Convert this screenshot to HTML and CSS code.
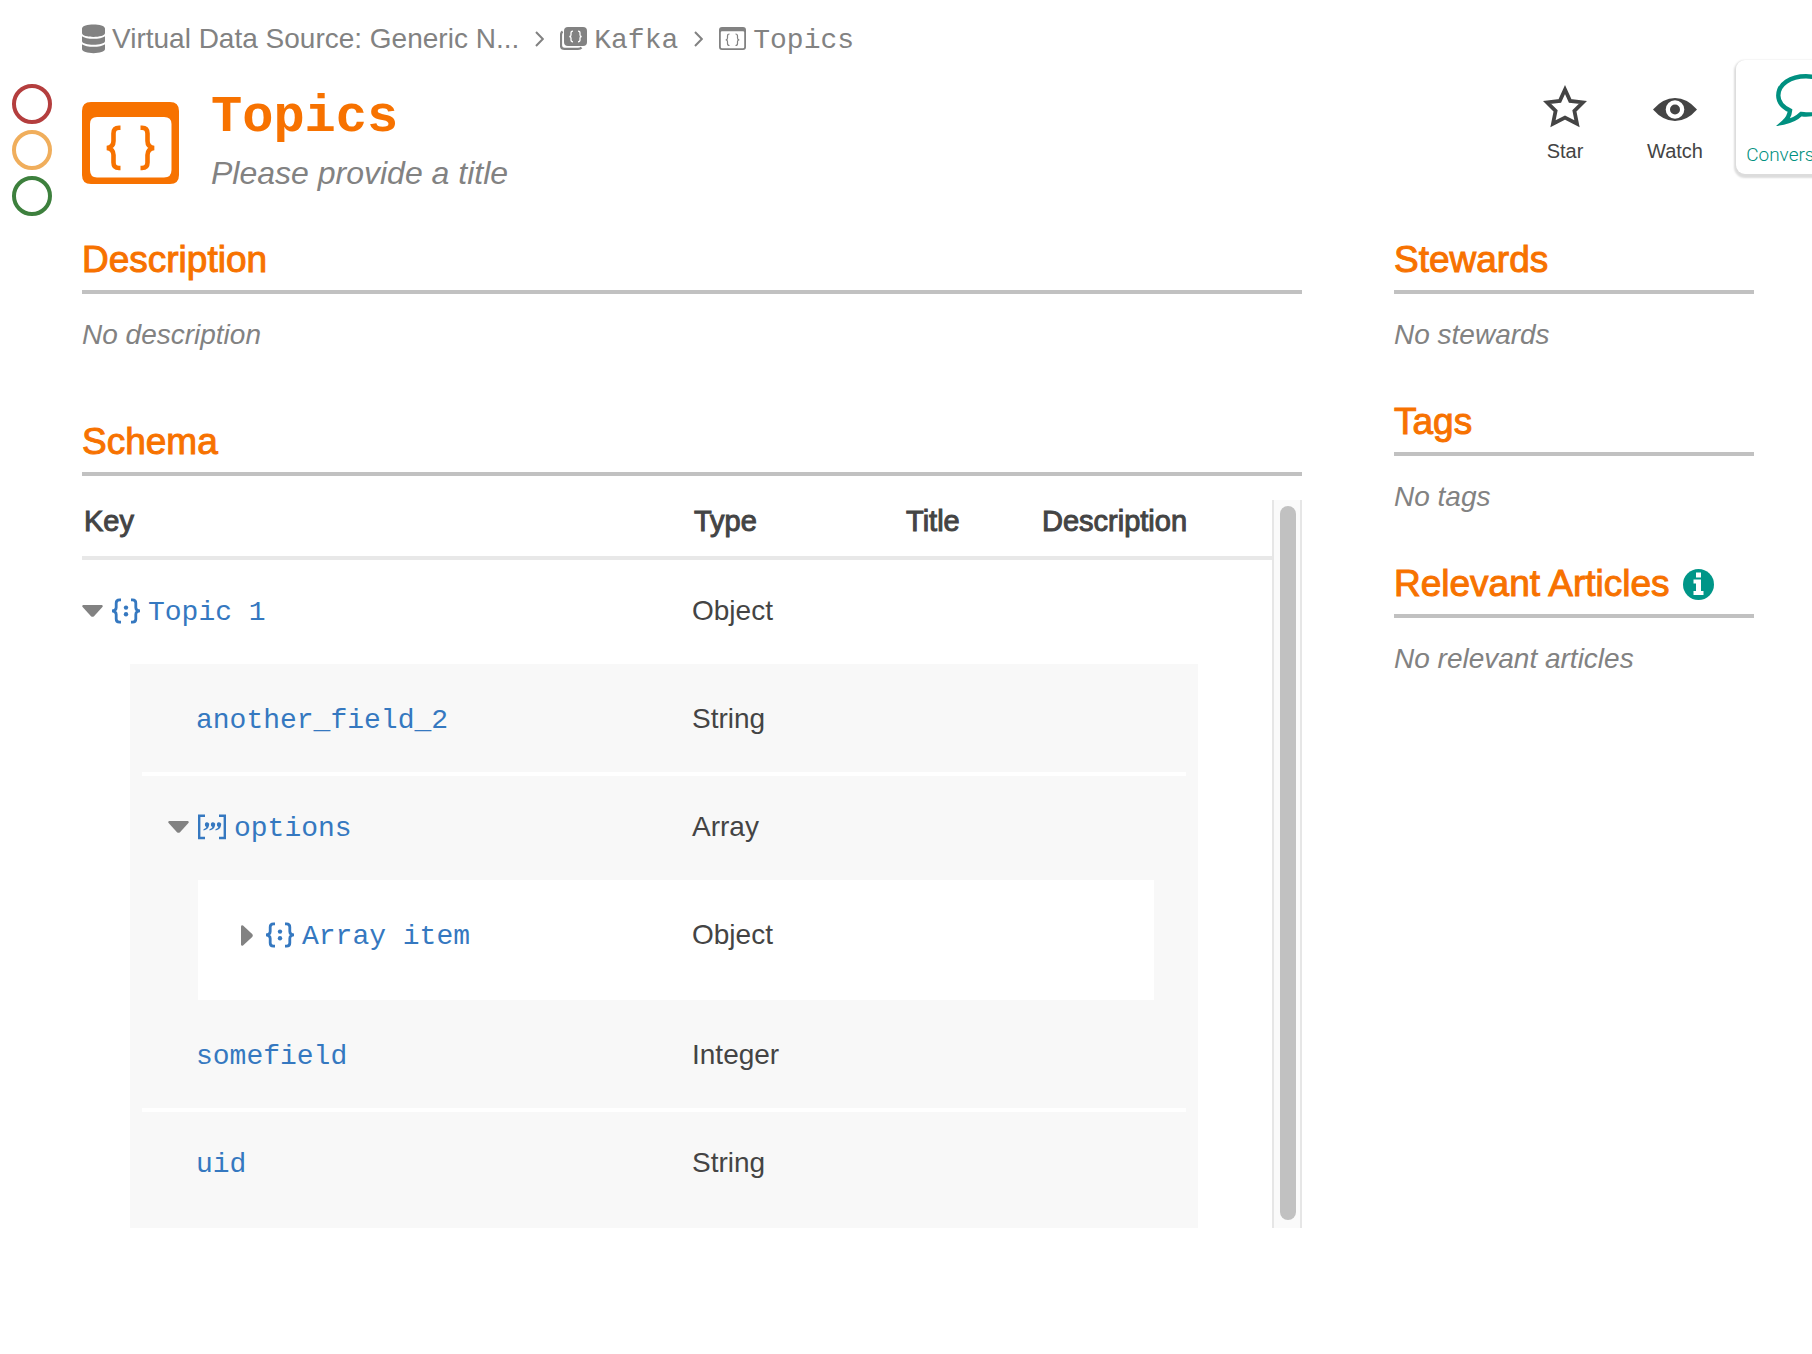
FILE: index.html
```html
<!DOCTYPE html>
<html lang="en">
<head>
<meta charset="utf-8">
<meta name="viewport" content="width=device-width, initial-scale=1">
<title>Topics</title>
<link rel="stylesheet" href="styles.css">
</head>
<body>
<svg class="sprite" aria-hidden="true">
  <symbol id="caret-down" viewBox="0 0 21 12"><path d="M1.2 0H19.8Q21.4 .6 20.4 2L12 11.2Q10.500 12.400 9 11.200L.6 2Q-.4 .6 1.200 0Z"/></symbol>
  <symbol id="caret-right" viewBox="0 0 12 21"><path d="M0 1.200V19.800Q.6 21.400 2 20.400L11.200 12Q12.400 10.500 11.200 9L2 .6Q.6 -.4 0 1.200Z"/></symbol>
  <symbol id="object" viewBox="0 0 28 26">
    <path d="M9 1.800H7.500Q4.200 1.800 4.200 5V9.500Q4.200 12.700 0 12.900Q4.200 13.100 4.200 16.500V21Q4.200 24.200 7.500 24.200H9M19 1.800H20.500Q23.800 1.800 23.800 5V9.500Q23.800 12.700 28 12.900Q23.800 13.100 23.800 16.500V21Q23.800 24.200 20.500 24.200H19" fill="none" stroke="currentColor" stroke-width="2.800"/>
    <circle cx="14" cy="9.600" r="2.200"/><circle cx="14" cy="16.300" r="2.200"/>
  </symbol>
  <symbol id="array" viewBox="0 0 28 26">
    <path d="M7 1.700H1.200V24H7M21 1.700H26.800V24H21" fill="none" stroke="currentColor" stroke-width="2.400"/>
    <path d="M7 9.500A2 2 0 0 1 11 11.500Q10.500 15.500 5.500 16.500V15.200Q8 14.500 8.500 13Q6.500 12.500 7 9.500Z"/>
    <path d="M13 9.500A2 2 0 0 1 17 11.500Q16.500 15.500 11.500 16.500V15.200Q14 14.500 14.500 13Q12.500 12.500 13 9.500Z"/>
    <path d="M19 9.500A2 2 0 0 1 23 11.500Q22.500 15.500 17.500 16.500V15.200Q20 14.500 20.500 13Q18.500 12.500 19 9.500Z"/>
  </symbol>
</svg>

<div class="page">
  <div class="flags">
    <button class="flag flag-red" type="button" aria-label="Deprecate"></button>
    <button class="flag flag-amber" type="button" aria-label="Warn"></button>
    <button class="flag flag-green" type="button" aria-label="Endorse"></button>
  </div>

  <div class="content">
    <nav class="crumbs" aria-label="Breadcrumb">
      <a class="crumb" href="#">
        <svg width="23" height="30" viewBox="0 0 23 30"><path d="M0 4.500C0 -1 23 -1 23 4.500V9C23 14.200 0 14.200 0 9ZM0 12.200C4 15.600 19 15.600 23 12.200V17C23 22 0 22 0 17ZM0 20.200C4 23.600 19 23.600 23 20.200V25C23 30.500 0 30.500 0 25Z"/></svg>
        <span>Virtual Data Source: Generic N...</span>
      </a>
      <svg class="chevron" width="9" height="16" viewBox="0 0 9 16"><path d="M1 1L7.800 8L1 15"/></svg>
      <a class="crumb" href="#">
        <svg width="27" height="24" viewBox="0 0 27 24"><path d="M8 0H23Q27 0 27 4V15Q27 19 23 19H8Q4 19 4 15V4Q4 0 8 0Z"/><path d="M2.600 4.500Q1 5.500 1 8V18.500Q1 21.800 4.500 21.800H18Q20.500 21.800 21.500 20.500" fill="none" stroke="currentColor" stroke-width="2.200"/><path d="M13 4.200Q11 4.200 11 6V8Q11 9.500 9.300 9.500Q11 9.500 11 11V13Q11 14.800 13 14.800M18 4.200Q20 4.200 20 6V8Q20 9.500 21.700 9.500Q20 9.500 20 11V13Q20 14.800 18 14.800" fill="none" stroke="#fff" stroke-width="1.300"/></svg>
        <span class="mono">Kafka</span>
      </a>
      <svg class="chevron" width="9" height="16" viewBox="0 0 9 16"><path d="M1 1L7.800 8L1 15"/></svg>
      <a class="crumb" href="#" aria-current="page">
        <svg width="27" height="24" viewBox="0 0 27 24"><path fill-rule="evenodd" d="M3 0H24Q27 0 27 3V20Q27 23 24 23H3Q0 23 0 20V3Q0 0 3 0ZM3 4.200Q1.800 4.200 1.800 5.500V20Q1.800 21.300 3 21.300H24Q25.200 21.300 25.200 20V5.500Q25.200 4.200 24 4.200Z"/><path d="M10.500 7Q8.500 7 8.500 9V11Q8.500 12.800 6.700 12.800Q8.500 12.800 8.500 14.500V16.500Q8.500 18.500 10.500 18.500M16.500 7Q18.500 7 18.500 9V11Q18.500 12.800 20.300 12.800Q18.500 12.800 18.500 14.500V16.500Q18.500 18.500 16.500 18.500" fill="none" stroke="currentColor" stroke-width="1.200"/></svg>
        <span class="mono">Topics</span>
      </a>
    </nav>

    <header class="head">
      <svg class="head-icon" width="97" height="82" viewBox="0 0 97 82"><path fill-rule="evenodd" d="M9 0H88Q97 0 97 9V73Q97 82 88 82H9Q0 82 0 73V9Q0 0 9 0ZM15 15Q8 15 8 22V68Q8 75.500 15 75.500H82Q89.500 75.500 89.500 68V22Q89.500 15 82 15Z"/><path d="M38.500 25.800H37Q31.500 25.800 31.500 31.500V39Q31.500 45 25 46Q31.500 47 31.500 53V60.500Q31.500 66 37 66H38.500M58.500 25.800H60Q65.500 25.800 65.500 31.500V39Q65.500 45 72 46Q65.500 47 65.500 53V60.500Q65.500 66 60 66H58.500" fill="none" stroke="currentColor" stroke-width="4.600"/></svg>
      <div class="head-text">
        <h1>Topics</h1>
        <p class="subtitle">Please provide a title</p>
      </div>
      <div class="actions">
        <button class="action" type="button">
          <svg width="44" height="44" viewBox="0 0 44 44"><path d="M22 5.500L27.200 17L40 18.400L31.400 26.900L34 39.700L22 33.600L10 39.700L12.600 26.900L4 18.400L16.800 17Z" fill="none" stroke="currentColor" stroke-width="3.800" stroke-miterlimit="10"/></svg>
          <span>Star</span>
        </button>
        <button class="action" type="button">
          <svg width="44" height="44" viewBox="0 0 44 44"><path d="M0 25.500Q10 14 22 14T44 25.500Q34 37 22 37T0 25.500Z"/><circle cx="22" cy="25.500" r="9.300" fill="#fff"/><circle cx="22" cy="25.500" r="5"/></svg>
          <span>Watch</span>
        </button>
        <button class="talk" type="button">
          <svg width="60" height="52" viewBox="0 0 60 52"><path d="M30 2.300C14.500 2.300 2.300 10 2.300 21.500C2.300 28 6.500 33 14 36.500C13.500 42 11 45.500 7.500 48.500C15 47 21 44 25 40C27 40.300 28.500 40.500 30 40.500C45.500 40.500 57.700 33 57.700 21.500C57.700 10 45.500 2.300 30 2.300Z" fill="none" stroke="currentColor" stroke-width="4.400"/></svg>
          <span>Conversations</span>
        </button>
      </div>
    </header>

    <div class="columns">
      <main class="main">
        <section>
          <h2>Description</h2>
          <p class="empty">No description</p>
        </section>

        <section>
          <h2>Schema</h2>
          <div class="schema">
            <table class="tree tree-root">
              <colgroup><col><col class="col-type"><col class="col-title"><col class="col-desc"></colgroup>
              <thead>
                <tr><th scope="col">Key</th><th scope="col">Type</th><th scope="col">Title</th><th scope="col">Description</th></tr>
              </thead>
              <tbody>
                <tr class="row">
                  <td><div class="key">
                    <button class="toggle" type="button" aria-label="Collapse Topic 1"><svg width="21" height="12"><use href="#caret-down"/></svg></button>
                    <a class="field" href="#"><svg width="28" height="26"><use href="#object"/></svg><span class="mono">Topic 1</span></a>
                  </div></td>
                  <td>Object</td><td></td><td></td>
                </tr>
                <tr>
                  <td colspan="4">
                    <div class="group group-gray">
                      <table class="tree">
                        <colgroup><col><col class="col-type"><col class="col-title"><col class="col-desc-2"></colgroup>
                        <tbody>
                          <tr class="row ruled">
                            <td><div class="key leaf"><a class="field" href="#"><span class="mono">another_field_2</span></a></div></td>
                            <td>String</td><td></td><td></td>
                          </tr>
                          <tr class="row">
                            <td><div class="key nested">
                              <button class="toggle" type="button" aria-label="Collapse options"><svg width="21" height="12"><use href="#caret-down"/></svg></button>
                              <a class="field" href="#"><svg width="28" height="26"><use href="#array"/></svg><span class="mono">options</span></a>
                            </div></td>
                            <td>Array</td><td></td><td></td>
                          </tr>
                          <tr>
                            <td colspan="4">
                              <div class="group group-white">
                                <table class="tree">
                                  <colgroup><col><col class="col-type"><col class="col-title"><col class="col-desc-3"></colgroup>
                                  <tbody>
                                    <tr class="row">
                                      <td><div class="key nested">
                                        <button class="toggle" type="button" aria-label="Expand Array item"><svg width="12" height="21"><use href="#caret-right"/></svg></button>
                                        <a class="field" href="#"><svg width="28" height="26"><use href="#object"/></svg><span class="mono">Array item</span></a>
                                      </div></td>
                                      <td>Object</td><td></td><td></td>
                                    </tr>
                                  </tbody>
                                </table>
                              </div>
                            </td>
                          </tr>
                          <tr class="row ruled">
                            <td><div class="key leaf"><a class="field" href="#"><span class="mono">somefield</span></a></div></td>
                            <td>Integer</td><td></td><td></td>
                          </tr>
                          <tr class="row">
                            <td><div class="key leaf"><a class="field" href="#"><span class="mono">uid</span></a></div></td>
                            <td>String</td><td></td><td></td>
                          </tr>
                        </tbody>
                      </table>
                    </div>
                  </td>
                </tr>
              </tbody>
            </table>
            <div class="scrollbar"><div class="thumb"></div></div>
          </div>
        </section>
      </main>

      <aside class="side">
        <section>
          <h2>Stewards</h2>
          <p class="empty">No stewards</p>
        </section>
        <section>
          <h2>Tags</h2>
          <p class="empty">No tags</p>
        </section>
        <section>
          <h2>Relevant Articles
            <svg class="info" width="31" height="31" viewBox="0 0 31 31"><circle cx="15.500" cy="15.500" r="15.500"/><path fill="#fff" d="M13 3.500H18V8.500H13ZM10.500 10.500H18V22H20.500V26H10.500V22H13V14.500H10.500Z"/></svg>
          </h2>
          <p class="empty">No relevant articles</p>
        </section>
      </aside>
    </div>
  </div>
</div>
</body>
</html>
```
FILE: styles.css
```css
* {
  box-sizing: border-box;
}

body {
  margin: 0;
  background: #fff;
  color: #444;
  font-family: "Liberation Sans", Arial, sans-serif;
  font-size: 28px;
  line-height: 36px;
  overflow-x: hidden;
}

h1, h2, p {
  margin: 0;
}

a {
  color: inherit;
  text-decoration: none;
}

button {
  padding: 0;
  border: 0;
  background: none;
  color: inherit;
  font: inherit;
  cursor: pointer;
}

svg {
  flex: none;
  display: block;
  fill: currentColor;
}

.sprite {
  position: absolute;
  width: 0;
  height: 0;
}

.mono {
  padding-top: 4px;
  font-family: "Liberation Mono", "Courier New", monospace;
}

.page {
  display: flex;
  padding-left: 12px;
}

.flags {
  display: flex;
  flex-direction: column;
  gap: 6px;
  flex: none;
  width: 40px;
  margin-right: 30px;
  padding-top: 84px;
}

.flag {
  width: 40px;
  height: 40px;
  border: 4px solid;
  border-radius: 50%;
}

.flag-red { color: #b43e3e; }
.flag-amber { color: #f0ae5c; }
.flag-green { color: #3d803d; }

.content {
  flex: 1;
  min-width: 0;
}

/* Breadcrumb */

.crumbs {
  display: flex;
  align-items: center;
  gap: 16px;
  padding-top: 21px;
  color: #828282;
  white-space: nowrap;
}

.crumb {
  display: flex;
  align-items: center;
  gap: 7px;
  height: 36px;
}

.chevron {
  fill: none;
  stroke: currentColor;
  stroke-width: 2px;
}

/* Page header */

.head {
  display: flex;
  align-items: flex-start;
  padding-top: 3px;
}

.head-icon {
  margin-top: 42px;
  color: #f77200;
}

.head-text {
  flex: 1;
  margin-left: 32px;
  padding-top: 28px;
}

h1 {
  color: #f77200;
  font: bold 52px/60px "Liberation Mono", "Courier New", monospace;
}

.subtitle {
  margin-top: 5px;
  color: #828282;
  font-size: 32px;
  font-style: italic;
  line-height: 40px;
}

.actions {
  display: flex;
  align-items: flex-start;
  margin-right: -64px;
}

.action,
.talk {
  display: flex;
  flex-direction: column;
  align-items: center;
  font-size: 20px;
  line-height: 24px;
}

.action {
  gap: 11px;
  width: 110px;
  padding-top: 24px;
}

.talk {
  gap: 17px;
  width: 140px;
  height: 114px;
  margin-left: 6px;
  padding-top: 14px;
  border-radius: 9px;
  background: #fff;
  box-shadow: 0 2px 2px 2px #dcdcdc;
  color: #009080;
  font-family: Roboto, "Liberation Sans", sans-serif;
  font-size: 19px;
  font-weight: 300;
}

/* Sections */

.columns {
  display: flex;
  align-items: flex-start;
  gap: 92px;
  padding: 44px 58px 0 0;
}

.main {
  flex: 1;
  min-width: 0;
  display: flex;
  flex-direction: column;
  gap: 66px;
}

.side {
  display: flex;
  flex-direction: column;
  gap: 46px;
  flex: none;
  width: 360px;
}

h2 {
  display: flex;
  align-items: center;
  gap: 13px;
  padding: 1px 0 8px;
  border-bottom: 4px solid #c1c1c1;
  color: #f77200;
  font-size: 37px;
  font-weight: normal;
  line-height: 44px;
  white-space: nowrap;
  -webkit-text-stroke: 1px currentColor;
}

.info {
  color: #009688;
}

.empty {
  margin-top: 23px;
  color: #828282;
  font-style: italic;
}

/* Schema tree */

.schema {
  display: flex;
  margin-top: 24px;
}

.tree {
  width: 100%;
  border-collapse: separate;
  border-spacing: 0;
  table-layout: fixed;
}

.tree-root {
  flex: 1;
  width: auto;
}

.col-type { width: 212px; }
.col-title { width: 136px; }
.col-desc { width: 232px; }
.col-desc-2 { width: 146px; }
.col-desc-3 { width: 102px; }

th {
  padding: 3px 0 17px 2px;
  border-bottom: 4px solid #e8e8e8;
  font-size: 29px;
  font-weight: normal;
  text-align: left;
  -webkit-text-stroke: 1px currentColor;
}

td {
  padding: 0;
}

.row > td {
  padding: 33px 0 35px;
}

.ruled > td {
  border-bottom: 4px solid #fff;
}

.group-gray {
  margin: 0 74px 0 48px;
  padding: 4px 12px 12px;
  background: #f8f8f8;
}

.group-white {
  margin: 0 32px 4px 56px;
  padding: 4px 12px 12px;
  background: #fff;
}

.key {
  display: flex;
  align-items: center;
  gap: 9px;
  height: 36px;
}

.nested { padding-left: 26px; }
.leaf { padding-left: 54px; }

.toggle {
  display: flex;
  justify-content: center;
  width: 21px;
  color: #828282;
}

.field {
  display: flex;
  align-items: center;
  gap: 8px;
  color: #3578c0;
  white-space: nowrap;
}

.scrollbar {
  flex: none;
  width: 30px;
  padding: 6px 4px 8px 6px;
  border: 2px solid #e6e6e6;
  border-width: 0 2px;
  background: #fafafa;
}

.thumb {
  width: 16px;
  height: 100%;
  border-radius: 8px;
  background: #c1c1c1;
}
```
